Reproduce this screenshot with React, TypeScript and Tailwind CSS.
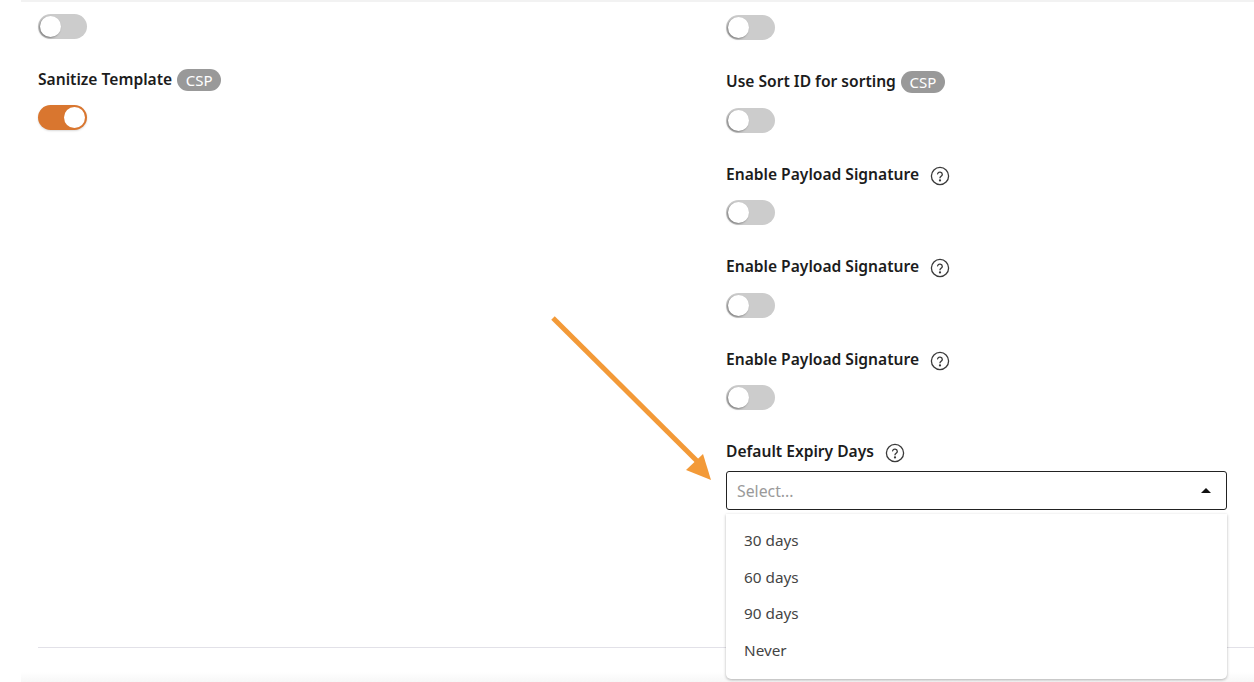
import React from "react";

function Toggle({ on = false }: { on?: boolean }) {
  return (
    <div
      className={
        on
          ? "flex h-[25px] w-[49px] items-center justify-end rounded-full bg-[#d9762f] pr-[2px] shadow-[0_1px_2px_rgba(0,0,0,0.15)]"
          : "flex h-[25px] w-[49px] items-center rounded-full bg-[#cccccc] pl-[2px]"
      }
    >
      <div
        className={
          on
            ? "h-[21px] w-[21px] rounded-full bg-white"
            : "h-[21px] w-[21px] rounded-full bg-white shadow-[-1px_1px_2px_rgba(0,0,0,0.4)]"
        }
      />
    </div>
  );
}

function Csp() {
  return (
    <span className="ml-[5px] flex h-[22px] w-[44px] items-center justify-center rounded-full bg-[#999999] text-[15px] font-normal text-white">
      CSP
    </span>
  );
}

function Help() {
  return (
    <svg width="20" height="20" viewBox="0 0 20 20" fill="none" stroke="#3a3a3a" strokeWidth="1.3" className="ml-[11px] mt-[2px]">
      <circle cx="10" cy="10" r="8.6" />
      <path d="M7.6 7.9a2.4 2.4 0 0 1 4.7.5c0 1.6-2.3 1.9-2.3 3.4" strokeLinecap="round" />
      <circle cx="10" cy="14.4" r="0.5" fill="#3a3a3a" />
    </svg>
  );
}

function Field({ label, children }: { label: string; children?: React.ReactNode }) {
  return (
    <div className="mb-[31px]">
      <div className="mb-[14.5px] flex h-[22px] items-center text-[15.6px] font-semibold text-[#1c1c1c]">
        <span>{label}</span>
        {children}
      </div>
      <Toggle />
    </div>
  );
}

export default function App() {
  return (
    <div
      className="relative h-[682px] w-full overflow-hidden bg-white"
      style={{ fontFamily: '"Noto Sans", "Open Sans", sans-serif' }}
    >
      <div className="ml-[21px] h-[2px] bg-[#f2f2f2]" />
      <div className="flex pl-[38px] pr-[27px]">
        <div className="w-[688px] pt-[11.5px]">
          <Toggle />
          <div className="mb-[13.5px] mt-[30.5px] flex h-[22px] items-center text-[15.6px] font-semibold text-[#1c1c1c]">
            <span>Sanitize Template</span>
            <Csp />
          </div>
          <Toggle on />
        </div>
        <div className="flex-1 pt-[13px]">
          <div className="mb-[31px]">
            <Toggle />
          </div>
          <Field label="Use Sort ID for sorting">
            <Csp />
          </Field>
          <Field label="Enable Payload Signature">
            <Help />
          </Field>
          <Field label="Enable Payload Signature">
            <Help />
          </Field>
          <Field label="Enable Payload Signature">
            <Help />
          </Field>
          <div className="flex h-[22px] items-center text-[15.6px] font-semibold text-[#1c1c1c]">
            <span>Default Expiry Days</span>
            <Help />
          </div>
          <div className="relative mt-[7.5px]">
            <div className="flex h-[39px] items-center justify-between rounded-[3px] border border-[#222222] pl-[10px] pr-[15px] text-[15.8px] text-[#9a9a9a]">
              <span className="pt-[3px]">Select...</span>
              <svg width="10" height="5" viewBox="0 0 10 5">
                <path d="M0 5L5 0L10 5Z" fill="#111111" />
              </svg>
            </div>
            <div className="absolute left-0 right-0 top-[43px] z-10 h-[165px] rounded-b-[5px] bg-white pl-[18px] pt-[8.5px] text-[15.3px] leading-[36.7px] text-[#444444] shadow-[0_1px_3px_rgba(0,0,0,0.3)]">
              <div>30 days</div>
              <div>60 days</div>
              <div>90 days</div>
              <div>Never</div>
            </div>
          </div>
        </div>
      </div>
      <div className="absolute bottom-[34px] left-[38px] right-0 h-px bg-[#e2e1e8]" />
      <div className="absolute bottom-0 left-[21px] right-0 h-[10px] bg-gradient-to-b from-white to-[#f7f7f7]" />
      <svg className="pointer-events-none absolute left-0 top-0" width="1254" height="682" viewBox="0 0 1254 682">
        <path d="M553 318L698 462" stroke="#f39a38" strokeWidth="5" fill="none" />
        <path d="M711 480L686 470L703 454Z" fill="#f39a38" />
      </svg>
    </div>
  );
}
